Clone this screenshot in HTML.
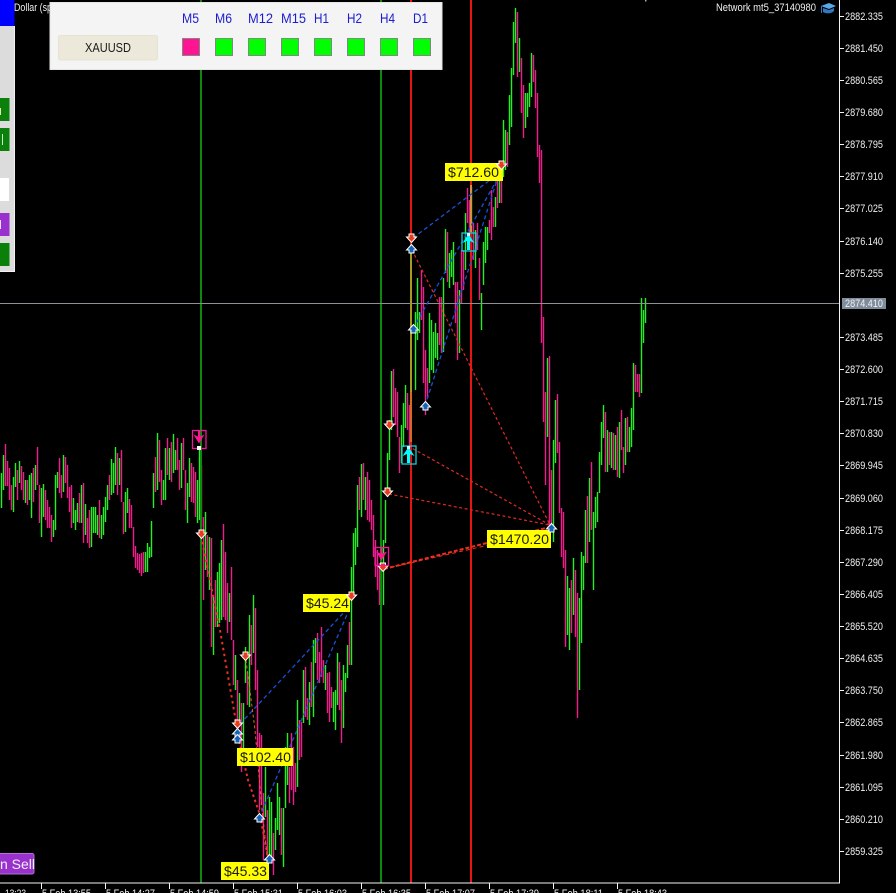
<!DOCTYPE html>
<html><head><meta charset="utf-8"><title>XAUUSD chart</title>
<style>
html,body{margin:0;padding:0;background:#000;width:896px;height:893px;overflow:hidden}
svg{display:block}
text{font-family:"Liberation Sans",sans-serif}
.ax text{fill:#f0f0f0;font-size:11px}
.tf text{fill:#1c1cd0;font-size:14px}
.y text{fill:#1a1a10;font-size:14px}
.t text{fill:#f0f0f0;font-size:11px}
</style></head><body>
<svg width="896" height="893" viewBox="0 0 896 893" xmlns="http://www.w3.org/2000/svg">
<defs>
<g id="dn"><path d="M-2.500-4H2.500V-1H5L0 4.500-5-1H-2.500Z" fill="#e83c1c" stroke="#fff" stroke-width="1"/></g>
<g id="up"><path d="M-2.500 4H2.500V1H5L0-4.500-5 1H-2.500Z" fill="#1464b8" stroke="#fff" stroke-width="1"/></g>
<g id="cy"><rect x="-6.500" y="-9" width="14" height="18" fill="none" stroke="#10d0d8" stroke-width="1.300"/><path d="M0-8L6 1 1.500-1V8H-1.500V-1L-6 1Z" fill="#00ffff"/><rect x="-1.500" y="-9" width="3" height="3" fill="#c0ffff"/></g>
<g id="mg"><rect x="-6.500" y="-9" width="13.500" height="18" fill="none" stroke="#f0189a" stroke-width="1.300"/><path d="M-1-9H1V-3L5.500-5 0 4-5.500-5-1-3Z" fill="#ff1493"/></g>
</defs>
<rect width="896" height="893" fill="#000"/>

<!-- bars: green -->
<path fill="none" stroke="#22f022" stroke-width="1.400" d="M1.500 473V508M3.500 455V490M13.500 477V512M15.500 463V487M19.500 461V483M25.500 480V503M29.500 475V500M31.500 473V518M35.500 465V490M41.500 488V537M43.500 484V517M53.500 520V537M55.500 475V530M57.500 472V488M63.500 455V492M73.500 498V523M75.500 510V530M77.500 503V522M81.500 485V523M85.500 504V535M91.500 507V547M93.500 507V533M95.500 507V533M97.500 515V535M101.500 515V539M103.500 507V535M105.500 497V522M107.500 485V510M111.500 459V495M113.500 463V493M115.500 447V485M119.500 458V485M125.500 492V532M127.500 488V513M145.500 552V572M147.500 543V572M149.500 547V558M151.500 521V557M153.500 473V508M157.500 433V490M163.500 480V500M165.500 448V500M169.500 448V480M173.500 434V473M175.500 450V470M181.500 443V488M187.500 483V523M189.500 458V497M197.500 480V523M199.500 450V520M205.500 512V570M209.500 537V590M213.500 597V655M217.500 572V627M219.500 563V623M221.500 540V620M229.500 593V622M235.500 655V690M239.500 693V720M243.500 703V750M245.500 647V683M249.500 615V707M253.500 595V653M265.500 767V817M269.500 797V857M271.500 802V860M275.500 818V850M277.500 783V830M279.500 797V835M283.500 808V867M285.500 747V808M287.500 733V785M297.500 700V787M303.500 670V723M309.500 682V725M313.500 640V717M315.500 638V663M325.500 665V690M333.500 692V722M335.500 690V730M337.500 653V705M343.500 665V728M345.500 673V692M347.500 645V678M351.500 567V665M353.500 533V593M355.500 528V565M357.500 485V547M361.500 464V517M365.500 477V510M383.500 540V605M385.500 500V543M387.500 453V497M389.500 420V460M391.500 371V430M401.500 425V463M403.500 403V447M405.500 385V428M415.500 312V390M417.500 278V340M419.500 312V333M429.500 313V383M431.500 320V370M433.500 332V373M435.500 323V358M437.500 333V360M443.500 278V352M445.500 229V273M449.500 253V288M451.500 250V277M453.500 242V285M459.500 290V353M465.500 213V270M471.500 187V243M475.500 230V268M481.500 293V330M483.500 242V285M485.500 227V263M487.500 227V250M495.500 197V227M499.500 173V203M503.500 120V177M505.500 130V170M509.500 95V145M511.500 68V127M513.500 22V75M515.500 8V43M519.500 38V72M525.500 93V128M527.500 93V117M529.500 83V107M531.500 53V97M547.500 358V437M553.500 440V542M555.500 400V463M567.500 576V635M569.500 588V650M573.500 558V615M579.500 598V690M581.500 552V643M583.500 556V590M585.500 510V563M589.500 478V542M593.500 512V590M595.500 497V528M597.500 492V522M599.500 452V493M601.500 422V465M603.500 405V438M607.500 430V472M611.500 432V468M615.500 435V470M619.500 422V478M625.500 418V465M629.500 427V452M631.500 408V447M633.500 363V430M641.500 298V393M643.500 310V343M645.500 298V323"/>
<!-- bars: pink -->
<path fill="none" stroke="#f01c8c" stroke-width="1.400" d="M5.500 444V486M7.500 461V486M9.500 468V500M11.500 485V510M17.500 470V500M21.500 466V490M23.500 472V500M27.500 480V505M33.500 468V502M37.500 447V485M39.500 485V523M45.500 490V520M47.500 500V528M49.500 507V528M51.500 515V542M59.500 458V493M61.500 475V498M65.500 457V483M67.500 465V498M69.500 487V512M71.500 485V528M79.500 493V523M83.500 483V543M87.500 518V543M89.500 510V548M99.500 500V538M109.500 475V500M117.500 453V495M121.500 450V502M123.500 502V534M129.500 499V528M131.500 505V528M133.500 527V557M135.500 546V568M137.500 553V570M139.500 554V573M141.500 553V576M143.500 552V573M155.500 457V492M159.500 440V482M161.500 470V505M167.500 438V475M171.500 442V482M177.500 438V470M179.500 460V490M183.500 438V470M185.500 470V510M191.500 463V502M193.500 467V503M195.500 472V517M201.500 465V527M203.500 517V600M207.500 535V577M211.500 538V647M215.500 580V627M223.500 524V617M225.500 552V620M227.500 583V633M231.500 567V640M233.500 640V685M237.500 680V735M241.500 703V772M247.500 672V705M251.500 625V665M255.500 608V690M257.500 670V747M259.500 733V810M261.500 735V805M263.500 793V860M267.500 810V853M273.500 833V875M281.500 808V855M289.500 767V803M291.500 733V790M293.500 747V805M295.500 763V792M299.500 720V760M301.500 722V757M305.500 667V717M307.500 698V720M311.500 662V707M317.500 633V680M319.500 652V683M321.500 627V677M323.500 660V683M327.500 673V713M329.500 672V722M331.500 687V708M339.500 662V710M341.500 680V743M349.500 622V665M359.500 477V510M363.500 463V500M367.500 472V520M369.500 480V522M371.500 500V530M373.500 515V557M375.500 540V577M377.500 550V590M379.500 563V605M393.500 369V417M395.500 388V425M397.500 392V437M399.500 437V473M407.500 393V430M409.500 405V450M421.500 270V320M423.500 287V383M425.500 350V415M427.500 368V397M439.500 297V345M441.500 297V353M447.500 232V282M455.500 282V323M457.500 282V360M461.500 250V303M463.500 250V290M467.500 188V223M469.500 200V240M473.500 223V260M477.500 223V250M479.500 258V300M489.500 220V233M491.500 190V240M493.500 207V227M497.500 178V208M501.500 170V203M507.500 132V167M517.500 12V77M521.500 58V113M523.500 85V138M533.500 55V82M535.500 70V108M537.500 93V157M539.500 145V183M541.500 150V343M543.500 317V422M545.500 392V485M549.500 356V530M551.500 470V523M557.500 394V453M559.500 442V513M561.500 508V557M563.500 512V568M565.500 550V647M571.500 580V633M575.500 570V637M577.500 593V718M587.500 496V563M591.500 462V530M605.500 412V472M609.500 432V465M613.500 433V470M617.500 427V477M621.500 410V450M623.500 447V473M627.500 417V452M635.500 365V392M637.500 374V392M639.500 374V397"/>

<!-- vertical lines -->
<g fill="none" stroke-width="2">
<path d="M201 0V883M381 0V883" stroke="#0d8a0d"/>
<path d="M411 0V883M471 0V883" stroke="#e61414"/>
<path d="M411 252V392" stroke="#a89a1c"/>
<path d="M411 392V442" stroke="#d86a20"/>
<path d="M471 185V232" stroke="#d89040"/>
</g>
<path d="M0 303.500H840" stroke="#8c9096" stroke-width="1"/>

<!-- dashed trade lines -->
<g fill="none" stroke="#1a50d8" stroke-width="1.300" stroke-dasharray="4 3">
<path d="M413 238L498 174M413 329L499 176M425 406L497 180"/>
<path d="M240 724L348 608M259 818L349 610"/>
</g>
<g fill="none" stroke="#e02a20" stroke-width="1.200" stroke-dasharray="3 2.500">
<path d="M412 250L550 525M408 446L550 525M389 494L550 525"/>
</g>
<g fill="none" stroke="#ee3020">
<path d="M384 569L550 527" stroke-width="2" stroke-dasharray="4 2"/>
<path d="M384 569L550 531" stroke-width="1" stroke-dasharray="4 3"/>
<path d="M201 536L220 630 236 722" stroke-width="2" stroke-dasharray="2.500 3.500"/>
<path d="M238 736L248 780 260 815 268 858" stroke-width="2" stroke-dasharray="2.500 3"/>
<path d="M246 660L255 730 262 810 267 855" stroke="#e06020" stroke-width="1" stroke-dasharray="3 2.500"/>
</g>

<!-- markers -->
<use href="#dn" x="411.500" y="238"/><use href="#up" x="411.500" y="249"/>
<use href="#dn" x="501.500" y="165"/>
<use href="#up" x="413.500" y="329"/><use href="#up" x="425.500" y="406"/>
<use href="#dn" x="389.500" y="425"/><use href="#dn" x="387.500" y="492"/>
<use href="#dn" x="383" y="567"/><use href="#up" x="551.500" y="528"/>
<use href="#dn" x="351.500" y="596"/><use href="#dn" x="201.500" y="534"/>
<use href="#dn" x="245.500" y="656"/><use href="#dn" x="237.500" y="724"/>
<use href="#up" x="237.500" y="733"/><use href="#up" x="237.500" y="739"/>
<use href="#up" x="259.500" y="818"/><use href="#up" x="269.500" y="859"/>

<use href="#cy" x="408.500" y="455"/><use href="#cy" x="468.500" y="242"/>
<use href="#mg" x="199" y="439.500"/><rect x="197" y="446" width="4" height="4" fill="#fff"/>
<use href="#mg" x="381.500" y="556.500"/>

<!-- yellow profit labels -->
<g class="y">
<rect x="445" y="163" width="58" height="18" fill="#ffff00"/><text x="448" y="177" textLength="51" lengthAdjust="spacingAndGlyphs">$712.60</text>
<rect x="487" y="530" width="64" height="18" fill="#ffff00"/><text x="490" y="544" textLength="59" lengthAdjust="spacingAndGlyphs">$1470.20</text>
<rect x="303" y="594" width="47" height="18" fill="#ffff00"/><text x="306" y="608" textLength="43" lengthAdjust="spacingAndGlyphs">$45.24</text>
<rect x="237" y="748" width="56" height="18" fill="#ffff00"/><text x="240" y="762" textLength="51" lengthAdjust="spacingAndGlyphs">$102.40</text>
<rect x="221" y="862" width="48" height="18" fill="#ffff00"/><text x="224" y="876" textLength="43" lengthAdjust="spacingAndGlyphs">$45.33</text>
</g>
<use href="#dn" x="351.500" y="596"/><use href="#dn" x="501.500" y="165"/><use href="#up" x="551.500" y="528"/><use href="#up" x="269.500" y="859"/>

<!-- axes -->
<path d="M0 883H840M839.500 0V883" stroke="#f4f4f4" stroke-width="1" fill="none"/>
<path stroke="#f4f4f4" fill="none" d="M840 16.500h4M840 48.500h4M840 80.500h4M840 112.500h4M840 144.500h4M840 176.500h4M840 208.500h4M840 241.500h4M840 273.500h4M840 337.500h4M840 369.500h4M840 401.500h4M840 433.500h4M840 465.500h4M840 498.500h4M840 530.500h4M840 562.500h4M840 594.500h4M840 626.500h4M840 658.500h4M840 690.500h4M840 722.500h4M840 755.500h4M840 787.500h4M840 819.500h4M840 851.500h4M41.500 883v6M105.500 883v6M169.500 883v6M233.500 883v6M297.500 883v6M361.500 883v6M425.500 883v6M489.500 883v6M553.500 883v6M617.500 883v6"/>
<g class="ax">
<text x="845" y="20" textLength="38" lengthAdjust="spacingAndGlyphs">2882.335</text>
<text x="845" y="52" textLength="38" lengthAdjust="spacingAndGlyphs">2881.450</text>
<text x="845" y="84" textLength="38" lengthAdjust="spacingAndGlyphs">2880.565</text>
<text x="845" y="116" textLength="38" lengthAdjust="spacingAndGlyphs">2879.680</text>
<text x="845" y="148" textLength="38" lengthAdjust="spacingAndGlyphs">2878.795</text>
<text x="845" y="180" textLength="38" lengthAdjust="spacingAndGlyphs">2877.910</text>
<text x="845" y="212" textLength="38" lengthAdjust="spacingAndGlyphs">2877.025</text>
<text x="845" y="245" textLength="38" lengthAdjust="spacingAndGlyphs">2876.140</text>
<text x="845" y="277" textLength="38" lengthAdjust="spacingAndGlyphs">2875.255</text>
<rect x="842" y="298" width="44" height="11" fill="#7f8c9b"/>
<text x="845" y="307" textLength="38" lengthAdjust="spacingAndGlyphs">2874.410</text>
<text x="845" y="341" textLength="38" lengthAdjust="spacingAndGlyphs">2873.485</text>
<text x="845" y="373" textLength="38" lengthAdjust="spacingAndGlyphs">2872.600</text>
<text x="845" y="405" textLength="38" lengthAdjust="spacingAndGlyphs">2871.715</text>
<text x="845" y="437" textLength="38" lengthAdjust="spacingAndGlyphs">2870.830</text>
<text x="845" y="469" textLength="38" lengthAdjust="spacingAndGlyphs">2869.945</text>
<text x="845" y="502" textLength="38" lengthAdjust="spacingAndGlyphs">2869.060</text>
<text x="845" y="534" textLength="38" lengthAdjust="spacingAndGlyphs">2868.175</text>
<text x="845" y="566" textLength="38" lengthAdjust="spacingAndGlyphs">2867.290</text>
<text x="845" y="598" textLength="38" lengthAdjust="spacingAndGlyphs">2866.405</text>
<text x="845" y="630" textLength="38" lengthAdjust="spacingAndGlyphs">2865.520</text>
<text x="845" y="662" textLength="38" lengthAdjust="spacingAndGlyphs">2864.635</text>
<text x="845" y="694" textLength="38" lengthAdjust="spacingAndGlyphs">2863.750</text>
<text x="845" y="726" textLength="38" lengthAdjust="spacingAndGlyphs">2862.865</text>
<text x="845" y="759" textLength="38" lengthAdjust="spacingAndGlyphs">2861.980</text>
<text x="845" y="791" textLength="38" lengthAdjust="spacingAndGlyphs">2861.095</text>
<text x="845" y="823" textLength="38" lengthAdjust="spacingAndGlyphs">2860.210</text>
<text x="845" y="855" textLength="38" lengthAdjust="spacingAndGlyphs">2859.325</text>
</g>
<g class="t">
<text x="5" y="897" textLength="21" lengthAdjust="spacingAndGlyphs">13:23</text>
<text x="42" y="897" textLength="49" lengthAdjust="spacingAndGlyphs">5 Feb 13:55</text>
<text x="106" y="897" textLength="49" lengthAdjust="spacingAndGlyphs">5 Feb 14:27</text>
<text x="170" y="897" textLength="49" lengthAdjust="spacingAndGlyphs">5 Feb 14:59</text>
<text x="234" y="897" textLength="49" lengthAdjust="spacingAndGlyphs">5 Feb 15:31</text>
<text x="298" y="897" textLength="49" lengthAdjust="spacingAndGlyphs">5 Feb 16:03</text>
<text x="362" y="897" textLength="49" lengthAdjust="spacingAndGlyphs">5 Feb 16:35</text>
<text x="426" y="897" textLength="49" lengthAdjust="spacingAndGlyphs">5 Feb 17:07</text>
<text x="490" y="897" textLength="49" lengthAdjust="spacingAndGlyphs">5 Feb 17:39</text>
<text x="554" y="897" textLength="49" lengthAdjust="spacingAndGlyphs">5 Feb 18:11</text>
<text x="618" y="897" textLength="49" lengthAdjust="spacingAndGlyphs">5 Feb 18:43</text>
</g>

<!-- top right -->
<text x="716" y="11" font-size="11" fill="#f0f0f0" textLength="100" lengthAdjust="spacingAndGlyphs">Network mt5_37140980</text>
<path d="M821 6L829 3 836 6 829 9Z" fill="#5aa8e8"/><path d="M823 8V12C826 14 831 14 834 11V8L829 10Z" fill="#3078c0"/><path d="M821.500 6V13" stroke="#3078c0"/>
<rect x="645" y="0" width="1.500" height="1.500" fill="#aaa"/>

<!-- left panel -->
<text x="14" y="11" font-size="11" fill="#f0f0f0" textLength="38" lengthAdjust="spacingAndGlyphs">Dollar (sp</text>
<rect x="0" y="26" width="15" height="246" fill="#f2f2f2"/>
<rect x="0" y="26" width="14" height="245" fill="#dcdcdc"/>
<rect x="0" y="0" width="14.500" height="26" fill="#0000ff"/>
<rect x="0" y="98" width="9.500" height="23" fill="#0c800c"/><rect x="0" y="108" width="1" height="7" fill="#e8e8a0"/>
<rect x="0" y="128" width="9.500" height="23" fill="#0c800c"/><rect x="2" y="134" width="1" height="11" fill="#c8f0c8"/>
<rect x="0" y="178" width="9" height="23" fill="#fff"/>
<rect x="0" y="213" width="9.500" height="23" fill="#9932cc"/><rect x="0" y="220" width="1" height="9" fill="#f0e0ff"/>
<rect x="0" y="243" width="9.500" height="23" fill="#0a7f0a"/>

<!-- top panel -->
<rect x="50" y="2.500" width="392" height="67" fill="#f4f4f4" stroke="#e4e4e4" stroke-width="1"/>
<rect x="58.500" y="35.500" width="99" height="24.500" rx="2" fill="#ece8da" stroke="#e6e2d4"/>
<text x="85" y="52" font-size="12.500" fill="#1a1a1a" textLength="46" lengthAdjust="spacingAndGlyphs">XAUUSD</text>
<g class="tf">
<text x="182" y="23" textLength="17" lengthAdjust="spacingAndGlyphs">M5</text>
<text x="215" y="23" textLength="17" lengthAdjust="spacingAndGlyphs">M6</text>
<text x="248" y="23" textLength="25" lengthAdjust="spacingAndGlyphs">M12</text>
<text x="281" y="23" textLength="25" lengthAdjust="spacingAndGlyphs">M15</text>
<text x="314" y="23" textLength="15" lengthAdjust="spacingAndGlyphs">H1</text>
<text x="347" y="23" textLength="15" lengthAdjust="spacingAndGlyphs">H2</text>
<text x="380" y="23" textLength="15" lengthAdjust="spacingAndGlyphs">H4</text>
<text x="413" y="23" textLength="15" lengthAdjust="spacingAndGlyphs">D1</text>
</g>
<g stroke="#808880" stroke-width="1">
<rect x="182.500" y="38.500" width="17" height="17" fill="#ff1493"/>
<rect x="215.500" y="38.500" width="17" height="17" fill="#00ff00"/>
<rect x="248.500" y="38.500" width="17" height="17" fill="#00ff00"/>
<rect x="281.500" y="38.500" width="17" height="17" fill="#00ff00"/>
<rect x="314.500" y="38.500" width="17" height="17" fill="#00ff00"/>
<rect x="347.500" y="38.500" width="17" height="17" fill="#00ff00"/>
<rect x="380.500" y="38.500" width="17" height="17" fill="#00ff00"/>
<rect x="413.500" y="38.500" width="17" height="17" fill="#00ff00"/>
</g>

<!-- sell button -->
<rect x="-3" y="853.500" width="37" height="20.500" rx="2" fill="#9932cc" stroke="#b070d8"/>
<text x="0" y="869" font-size="14" fill="#f4f0f8">n Sell</text>
</svg>
</body></html>
